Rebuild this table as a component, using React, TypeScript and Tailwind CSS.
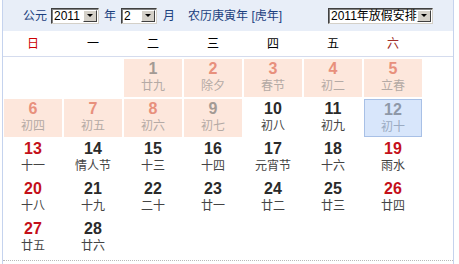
import React from 'react';

type Day = {
    n?: number;
    lunar?: string;
    kind?: 'off' | 'offGray' | 'today' | 'normal';
    red?: boolean;
};

const weekdays = ['日', '一', '二', '三', '四', '五', '六'];

const days: Day[] = [
    {}, {},
    { n: 1, lunar: '廿九', kind: 'offGray' },
    { n: 2, lunar: '除夕', kind: 'off' },
    { n: 3, lunar: '春节', kind: 'off' },
    { n: 4, lunar: '初二', kind: 'off' },
    { n: 5, lunar: '立春', kind: 'off' },
    { n: 6, lunar: '初四', kind: 'off' },
    { n: 7, lunar: '初五', kind: 'off' },
    { n: 8, lunar: '初六', kind: 'off' },
    { n: 9, lunar: '初七', kind: 'offGray' },
    { n: 10, lunar: '初八' },
    { n: 11, lunar: '初九' },
    { n: 12, lunar: '初十', kind: 'today' },
    { n: 13, lunar: '十一', red: true },
    { n: 14, lunar: '情人节' },
    { n: 15, lunar: '十三' },
    { n: 16, lunar: '十四' },
    { n: 17, lunar: '元宵节' },
    { n: 18, lunar: '十六' },
    { n: 19, lunar: '雨水', red: true },
    { n: 20, lunar: '十八', red: true },
    { n: 21, lunar: '十九' },
    { n: 22, lunar: '二十' },
    { n: 23, lunar: '廿一' },
    { n: 24, lunar: '廿二' },
    { n: 25, lunar: '廿三' },
    { n: 26, lunar: '廿四', red: true },
    { n: 27, lunar: '廿五', red: true },
    { n: 28, lunar: '廿六' },
];

function Select({ value, width }: { value: string; width: string }) {
    return (
        <div className={`${width} h-[16px] flex items-center bg-white border border-t-[#404040] border-l-[#404040] border-b-[#d4d0c8] border-r-[#d4d0c8] shadow-[inset_1px_1px_0_#808080]`}>
            <span className="flex-1 pl-[2px] text-[12px] leading-[14px] text-black">{value}</span>
            <span className="w-[14px] h-[12px] mr-[1px] flex items-center justify-center bg-[#d4d0c8] border border-t-white border-l-white border-b-[#404040] border-r-[#404040]">
                <span className="w-0 h-0 border-l-[3px] border-r-[3px] border-t-[3px] border-l-transparent border-r-transparent border-t-black" />
            </span>
        </div>
    );
}

function Cell({ d }: { d: Day }) {
    if (!d.n) return <div />;
    let box = '';
    let num = d.red ? 'text-[#c4101a]' : 'text-[#2a2a2a]';
    let lunar = 'text-[#444]';
    if (d.kind === 'off') {
        box = 'bg-[#fde7dc]';
        num = 'text-[#e8907c]';
        lunar = 'text-[#b4aaa5]';
    } else if (d.kind === 'offGray') {
        box = 'bg-[#fde7dc]';
        num = 'text-[#a39a94]';
        lunar = 'text-[#b4aaa5]';
    } else if (d.kind === 'today') {
        box = 'bg-[#d8e6fb] border border-[#a8c0e6]';
        num = 'text-[#8e98a8]';
        lunar = 'text-[#9babc2]';
    }
    return (
        <div className={`flex flex-col items-center h-[38px] ${box}`}>
            <span className={`pt-[1px] text-[16px] leading-[17px] font-bold font-['Liberation_Sans',Arial,sans-serif] ${num}`}>
                {d.n}
            </span>
            <span className={`mt-[1px] text-[12px] leading-[16px] ${lunar}`}>{d.lunar}</span>
        </div>
    );
}

export default function App() {
    return (
        <div className="w-[459px] h-[264px] bg-white font-['Liberation_Sans','Noto_Sans_CJK_SC',sans-serif]">
            <div className="ml-[2px] w-[452px] h-[264px] border-l border-r border-[#c5d3ee] flex flex-col">
                {/* Header */}
                <div className="h-[31px] bg-[#e8eef8] flex items-center pl-[20px] pr-[20px] text-[12px] text-[#1b3f7e]">
                    <span className="mr-[4px]">公元</span>
                    <Select value="2011" width="w-[48px]" />
                    <span className="mx-[5px]">年</span>
                    <Select value="2" width="w-[36px]" />
                    <span className="ml-[6px]">月</span>
                    <span className="ml-[13px]">农历庚寅年 [虎年]</span>
                    <div className="ml-auto">
                        <Select value="2011年放假安排" width="w-[105px]" />
                    </div>
                </div>

                {/* Weekdays */}
                <div className="h-[26px] grid grid-cols-[repeat(7,58px)] gap-x-[2px] pl-[1px] items-center border-b border-[#d5dcee] text-[12px]">
                    {weekdays.map((w, i) => (
                        <div
                            key={w}
                            className={`text-center ${i === 0 ? 'text-[#c00]' : i === 6 ? 'text-[#a0302a]' : 'text-black'}`}
                        >
                            {w}
                        </div>
                    ))}
                </div>

                {/* Days */}
                <div className="pt-[2px] pl-[1px] grid grid-cols-[repeat(7,58px)] auto-rows-[38px] gap-[2px]">
                    {days.map((d, i) => (
                        <Cell key={i} d={d} />
                    ))}
                </div>

                <div className="mt-[3px] border-t border-dotted border-[#b8b8b8]" />
            </div>
        </div>
    );
}
